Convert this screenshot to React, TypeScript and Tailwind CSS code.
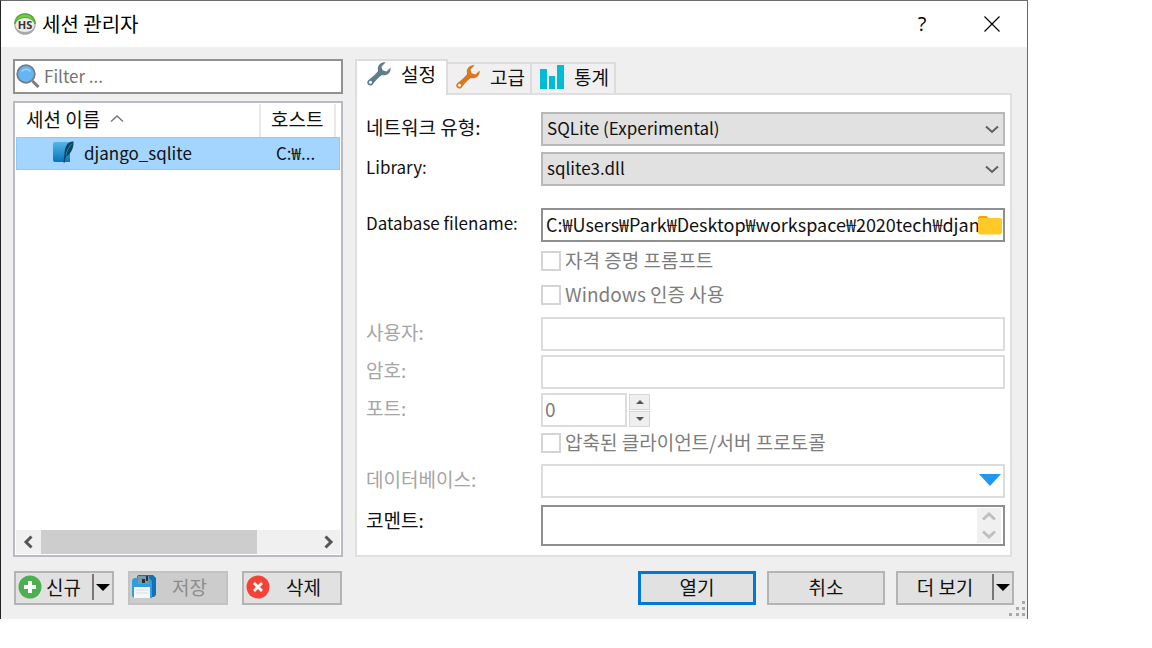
import { useId, useState } from "react";
import type { ReactNode } from "react";

const disabledBox = "h-[34px] w-full border-2 border-[#dcdcdc] bg-white px-1 outline-none";
const buttonBase =
  "flex h-[34px] items-center border-2 border-[#b4b4b4] bg-[#e1e1e1] pb-0.5";

function AppLogo() {
  return (
    <svg className="size-6" viewBox="0 0 24 24" aria-hidden="true">
      <circle cx="12" cy="12" r="10.8" fill="#a9aaa8" />
      <path d="M1.2 12a10.8 10.8 0 0 1 21.6 0z" fill="#4fae2b" />
      <path d="M3 8.5a10 10 0 0 1 18 0 13 13 0 0 0-18 0z" fill="#7cc84f" />
      <ellipse cx="12" cy="13" rx="9.600" ry="7" fill="#ececea" />
      <text x="12" y="16.500" textAnchor="middle" fontSize="11" fontWeight="700" fontFamily="Open Sans, sans-serif" fill="#333">
        HS
      </text>
    </svg>
  );
}

function SearchIcon() {
  return (
    <svg className="size-6 shrink-0" viewBox="0 0 24 24" aria-hidden="true">
      <path d="M16.5 17l6 6" stroke="#7c7c7c" strokeWidth="3" />
      <circle cx="10" cy="10" r="8.800" fill="#64b5f6" stroke="#7b7b7b" strokeWidth="1.800" />
      <path d="M5.5 7.500c2.500-3 6.500-3 9 0" fill="none" stroke="#a5d4fa" strokeWidth="1.500" />
    </svg>
  );
}

function WrenchIcon({ color }: { color: string }) {
  return (
    <svg className="size-6 shrink-0" viewBox="0 0 24 24" aria-hidden="true">
      <path
        d="M23.600 5.600 19.500 9.600 15.600 8.300 14.500 4.500 18.600.4C14.900-.2 11 2.200 10.800 6.700c0 1 .1 1.700.3 2.400C8.900 12.300 5.500 15.100 1.500 18c-1.500 1.200-1.700 3.200-.5 4.600 1.300 1.400 3.500 1.300 4.700-.2C8.500 18.600 11.300 15.300 14.900 13c4.800 1.300 9.200-2.300 8.700-7.400z"
        fill={color}
      />
      <circle cx="3.500" cy="20.300" r="1.500" fill="#fff" />
    </svg>
  );
}

function ChartIcon() {
  return (
    <svg className="size-6 shrink-0" viewBox="0 0 24 24" fill="#00bcd4" aria-hidden="true">
      <path d="M0 4h7v20H0zM9 11h6v13H9zM17 0h7v24h-7z" />
    </svg>
  );
}

function SqliteIcon() {
  return (
    <svg className="h-[23px] w-[21px]" viewBox="0 0 21 23" aria-hidden="true">
      <defs>
        <linearGradient id="sqlite-sheet" x1="0" y1="0" x2="0" y2="1">
          <stop offset="0" stopColor="#55b5e6" />
          <stop offset="1" stopColor="#0873bd" />
        </linearGradient>
      </defs>
      <path d="M2 1h15v20H2a2 2 0 0 1-2-2V3a2 2 0 0 1 2-2z" fill="url(#sqlite-sheet)" />
      <path d="M20.500.5c-4-.8-7.500 3-8.500 8-.5 3-.6 5-1.500 13l1.200.2c.3-3 .7-4.700 1.300-6.200 4-1.500 8-8 7.500-15z" fill="#0b4560" />
      <path d="M19 2.500c-3 3-5 7-6.200 12" fill="none" stroke="#4b8ba5" strokeWidth=".8" />
    </svg>
  );
}

function PlusIcon() {
  return (
    <svg className="size-6 shrink-0" viewBox="0 0 24 24" aria-hidden="true">
      <circle cx="12" cy="12" r="11.500" fill="#4caf50" />
      <path d="M12 6v12M6 12h12" stroke="#fff" strokeWidth="4" />
    </svg>
  );
}

function DeleteIcon() {
  return (
    <svg className="size-6 shrink-0" viewBox="0 0 24 24" aria-hidden="true">
      <circle cx="12" cy="12" r="11.500" fill="#f44336" />
      <path d="M8 8l8 8M16 8l-8 8" stroke="#fff" strokeWidth="2.800" />
    </svg>
  );
}

function SaveIcon() {
  return (
    <svg className="size-6 shrink-0" viewBox="0 0 24 24" aria-hidden="true">
      <path d="M5 2 6 0h15l3 3v17l-2 2H6z" fill="#1272b8" />
      <path d="M2 3h15l3 3v17H2L0 21V5z" fill="#2f9de0" />
      <path d="M6 1h11v8H6z" fill="#7b98a6" />
      <path d="M10 4h3v4h-3zM14 1h2v5h-2z" fill="#23333d" />
      <path d="M2 12h16v11H2z" fill="#f4f8fa" />
      <path d="M4 15h12M4 18h12" stroke="#d3dde2" strokeWidth="1" />
    </svg>
  );
}

function FolderIcon() {
  return (
    <svg className="h-5 w-6" viewBox="0 0 24 20" aria-hidden="true">
      <path d="M0 3a2 2 0 0 1 2-2h6.500l2.500 2.500V8H0z" fill="#ffa000" />
      <rect y="3" width="24" height="16.500" rx="2" fill="#ffca28" />
    </svg>
  );
}

type Direction = "up" | "down" | "left" | "right";

const chevrons: Record<Direction, string> = {
  up: "M1 9.500 7 4l6 5.500",
  down: "M1 4.500 7 10l6-5.500",
  left: "M9.500 1.500 4 7l5.500 5.500",
  right: "M4.500 1.500 10 7l-5.500 5.500",
};

function Chevron({ to, color, width = 2 }: { to: Direction; color: string; width?: number }) {
  return (
    <svg className="size-3.5" viewBox="0 0 14 14" aria-hidden="true">
      <path d={chevrons[to]} fill="none" stroke={color} strokeWidth={width} />
    </svg>
  );
}

function DropArrow() {
  return (
    <svg className="h-[7px] w-3.5" viewBox="0 0 14 7" aria-hidden="true">
      <path d="M0 0h14L7 7z" fill="#000" />
    </svg>
  );
}

function Field({
  label,
  latin,
  disabled,
  children,
}: {
  label: string;
  latin?: boolean;
  disabled?: boolean;
  children: (id: string) => ReactNode;
}) {
  const id = useId();
  return (
    <div className="flex">
      <label
        htmlFor={id}
        className={`h-[34px] w-[175px] shrink-0 pt-px leading-7 ${latin ? "text-[17px]" : ""} ${disabled ? "text-[#a5a5a5]" : "text-[#111]"}`}
      >
        {label}
      </label>
      <div className="relative min-w-0 flex-1">{children(id)}</div>
    </div>
  );
}

function SelectField({ label, value, latin }: { label: string; value: string; latin?: boolean }) {
  return (
    <Field label={label} latin={latin}>
      {(id) => (
        <>
          <select
            id={id}
            defaultValue={value}
            className="h-[34px] w-full appearance-none border-2 border-[#b9b9b9] bg-[#e1e1e1] px-1 pb-0.5 text-[17px] outline-none"
          >
            <option>{value}</option>
          </select>
          <span className="pointer-events-none absolute inset-y-0 right-1.5 flex items-center">
            <Chevron to="down" color="#606060" />
          </span>
        </>
      )}
    </Field>
  );
}

function CheckField({ label }: { label: string }) {
  return (
    <label className="ml-[175px] flex h-5 items-center gap-1 text-[#7d7d7d]">
      <input type="checkbox" disabled className="size-5 appearance-none border-2 border-[#d4d4d4] bg-white" />
      <span className="pb-0.5">{label}</span>
    </label>
  );
}

const tabs = [
  { name: "설정", icon: <WrenchIcon color="#607d8b" /> },
  { name: "고급", icon: <WrenchIcon color="#d9781f" /> },
  { name: "통계", icon: <ChartIcon /> },
];

export default function App() {
  const [tab, setTab] = useState(0);

  return (
    <main className="w-full max-w-[1028px] border-x border-t border-r-[#6b6b6b] border-l-[#222] border-t-[#6b6b6b] bg-[#efefef] font-['Noto_Sans_CJK_KR',sans-serif] text-[19px] leading-7 text-[#111]">
      <header className="flex h-[46px] items-center bg-white pl-3 text-black">
        <AppLogo />
        <h1 className="flex-1 pl-[5px] text-[20px]">세션 관리자</h1>
        <button type="button" aria-label="도움말" className="flex h-full w-[70px] items-center justify-center font-['Open_Sans',sans-serif] text-[20px]">
          ?
        </button>
        <button type="button" aria-label="닫기" className="flex h-full w-[70px] items-center justify-center">
          <svg className="size-4" viewBox="0 0 16 16" aria-hidden="true">
            <path d="M.5.5l15 15M15.500.5l-15 15" stroke="#000" strokeWidth="1.200" />
          </svg>
        </button>
      </header>

      <div className="flex gap-3 pt-3 pr-[15px] pl-3">
        <section className="flex w-[330px] shrink-0 flex-col gap-[7px]">
          <div className="flex h-[35px] items-center gap-1 border-2 border-[#919191] bg-white pb-0.5 pl-px">
            <SearchIcon />
            <input
              type="text"
              aria-label="Filter"
              placeholder="Filter ..."
              className="min-w-0 flex-1 bg-transparent text-[17px] outline-none placeholder:text-[#747474]"
            />
          </div>

          <div className="flex flex-1 flex-col border-2 border-[#b8bcc2] bg-white p-px">
            <table className="w-full table-fixed border-collapse text-left">
              <thead>
                <tr className="h-[33px]">
                  <th className="w-[244px] border-r-2 border-[#e8e8e8] p-0 pb-1 pl-2.5 font-normal">
                    <span className="flex items-center gap-2.5">
                      세션 이름
                      <Chevron to="up" color="#777" width={1.500} />
                    </span>
                  </th>
                  <th className="w-[75px] border-r-2 border-[#e8e8e8] p-0 pb-1 pl-2.5 font-normal">호스트</th>
                  <td />
                </tr>
              </thead>
              <tbody>
                <tr className="h-[33px] bg-[#a3d5ff] text-[17px] outline outline-1 -outline-offset-1 outline-[#90c9f8]">
                  <td className="p-0 pb-0.5 pl-[37px]">
                    <span className="flex items-center gap-2.5">
                      <SqliteIcon />
                      django_sqlite
                    </span>
                  </td>
                  <td className="p-0 pb-0.5 pl-4">C:₩...</td>
                  <td />
                </tr>
              </tbody>
            </table>
            <div className="mt-auto flex h-6 bg-[#f0f0f0]">
              <button type="button" aria-label="왼쪽으로 스크롤" className="flex w-[25px] items-center justify-center">
                <Chevron to="left" color="#555" width={3} />
              </button>
              <div className="flex-1">
                <div className="h-full w-[79%] bg-[#cdcdcd]" />
              </div>
              <button type="button" aria-label="오른쪽으로 스크롤" className="flex w-[25px] items-center justify-center">
                <Chevron to="right" color="#555" width={3} />
              </button>
            </div>
          </div>
        </section>

        <section className="min-w-0 flex-1">
          <div role="tablist" className="flex h-[34px] items-end">
            {tabs.map(({ name, icon }, index) => (
              <button
                key={name}
                type="button"
                role="tab"
                aria-selected={tab === index}
                onClick={() => setTab(index)}
                className={
                  tab === index
                    ? "relative -mb-0.5 flex h-9 w-[93px] items-center gap-2.5 border-2 border-b-0 border-[#dcdcdc] bg-white pb-2 pl-2.5"
                    : "flex h-[31px] w-[84px] items-center gap-2.5 border-t-2 border-r-2 border-[#dcdcdc] bg-[#f0f0f0] pb-1 pl-2"
                }
              >
                {icon}
                {name}
              </button>
            ))}
          </div>

          <form className="flex flex-col border-2 border-[#dfdfdf] bg-white pt-[17px] pr-[5px] pb-[9px] pl-[9px]">
            <div className="flex flex-col gap-1.5">
              <SelectField label="네트워크 유형:" value="SQLite (Experimental)" />
              <SelectField label="Library:" value="sqlite3.dll" latin />
            </div>

            <div className="mt-[22px]">
              <Field label="Database filename:" latin>
                {(id) => (
                  <div className="flex h-[34px] items-center border-2 border-[#8f8f8f] bg-white pl-[3px]">
                    <input
                      id={id}
                      type="text"
                      defaultValue="C:₩Users₩Park₩Desktop₩workspace₩2020tech₩django"
                      className="min-w-0 flex-1 pb-0.5 text-[18px] outline-none"
                    />
                    <button type="button" aria-label="파일 찾기" className="pr-px">
                      <FolderIcon />
                    </button>
                  </div>
                )}
              </Field>
            </div>

            <div className="mt-[9px] flex flex-col gap-3.5">
              <CheckField label="자격 증명 프롬프트" />
              <CheckField label="Windows 인증 사용" />
            </div>

            <div className="mt-3 flex flex-col gap-1">
              <Field label="사용자:" disabled>
                {(id) => <input id={id} type="text" disabled className={disabledBox} />}
              </Field>
              <Field label="암호:" disabled>
                {(id) => <input id={id} type="password" disabled className={disabledBox} />}
              </Field>
              <Field label="포트:" disabled>
                {(id) => (
                  <div className="flex gap-0.5">
                    <input
                      id={id}
                      type="text"
                      disabled
                      defaultValue="0"
                      className="h-[34px] w-[86px] border-2 border-[#dcdcdc] bg-white px-0.5 pb-1 text-[#7d7d7d]"
                    />
                    <div className="flex flex-col justify-center gap-px">
                      <button type="button" disabled aria-label="증가" className="flex h-4 w-[21px] items-center justify-center border border-[#d6d6d6] bg-[#efefef]">
                        <svg className="h-1 w-2" viewBox="0 0 8 4" aria-hidden="true">
                          <path d="M0 4h8L4 0z" fill="#555" />
                        </svg>
                      </button>
                      <button type="button" disabled aria-label="감소" className="flex h-4 w-[21px] items-center justify-center border border-[#d6d6d6] bg-[#efefef]">
                        <svg className="h-1 w-2" viewBox="0 0 8 4" aria-hidden="true">
                          <path d="M0 0h8L4 4z" fill="#555" />
                        </svg>
                      </button>
                    </div>
                  </div>
                )}
              </Field>
            </div>

            <div className="mt-1.5">
              <CheckField label="압축된 클라이언트/서버 프로토콜" />
            </div>

            <div className="mt-[11px] flex flex-col gap-[7px]">
              <Field label="데이터베이스:" disabled>
                {(id) => (
                  <div className="flex h-[34px] items-center border-2 border-[#dcdcdc] bg-white pb-0.5 pl-1">
                    <input id={id} type="text" disabled className="min-w-0 flex-1" />
                    <button type="button" aria-label="데이터베이스 선택" className="pr-0.5">
                      <svg className="h-3 w-[22px]" viewBox="0 0 22 12" aria-hidden="true">
                        <path d="M0 0h22L11 12z" fill="#2196f3" />
                      </svg>
                    </button>
                  </div>
                )}
              </Field>
              <Field label="코멘트:">
                {(id) => (
                  <div className="flex h-[41px] border-2 border-[#8f8f8f] bg-white p-px">
                    <textarea id={id} className="min-w-0 flex-1 resize-none outline-none" />
                    <div className="mr-px flex w-6 flex-col items-center justify-between bg-[#f0f0f0] py-0.5">
                      <Chevron to="up" color="#bfbfbf" width={3} />
                      <Chevron to="down" color="#bfbfbf" width={3} />
                    </div>
                  </div>
                )}
              </Field>
            </div>
          </form>
        </section>
      </div>

      <footer className="flex justify-between pt-3.5 pl-[13px]">
        <div className="flex gap-3.5 pb-3.5">
          <div className={`${buttonBase} w-[100px]`}>
            <button type="button" className="flex flex-1 items-center gap-1 pl-0.5">
              <PlusIcon />
              신규
            </button>
            <button type="button" aria-label="신규 옵션" className="flex h-[26px] items-center border-l-2 border-[#777] pr-0.5 pl-0.5">
              <DropArrow />
            </button>
          </div>
          <button type="button" disabled className="flex h-[34px] w-[100px] items-center border-2 border-[#c2c2c2] bg-[#cccccc] pb-0.5 pl-0.5 text-[#8c8c8c]">
            <SaveIcon />
            <span className="pl-4">저장</span>
          </button>
          <button type="button" className={`${buttonBase} w-[100px] pl-0.5`}>
            <DeleteIcon />
            <span className="pl-4">삭제</span>
          </button>
        </div>

        <div className="relative flex gap-[11px] pr-[13px] pb-3.5">
          <button type="button" className="flex h-[34px] w-[118px] items-center justify-center border-3 border-[#0078d7] bg-[#e1e1e1] pb-0.5">
            열기
          </button>
          <button type="button" className={`${buttonBase} w-[118px] justify-center`}>
            취소
          </button>
          <div className={`${buttonBase} w-[118px]`}>
            <button type="button" className="flex-1 text-center">
              더 보기
            </button>
            <button type="button" aria-label="더 보기 옵션" className="flex h-[26px] items-center border-l-2 border-[#777] pr-0.5 pl-0.5">
              <DropArrow />
            </button>
          </div>
          <svg className="absolute right-0.5 bottom-0.5 size-4" viewBox="0 0 16 16" fill="#a9a9a9" aria-hidden="true">
            <path d="M13 0h3v3h-3zM7 6h3v3H7zM13 6h3v3h-3zM0 12h3v3H0zM7 12h3v3H7zM13 12h3v3h-3z" />
          </svg>
        </div>
      </footer>
    </main>
  );
}
